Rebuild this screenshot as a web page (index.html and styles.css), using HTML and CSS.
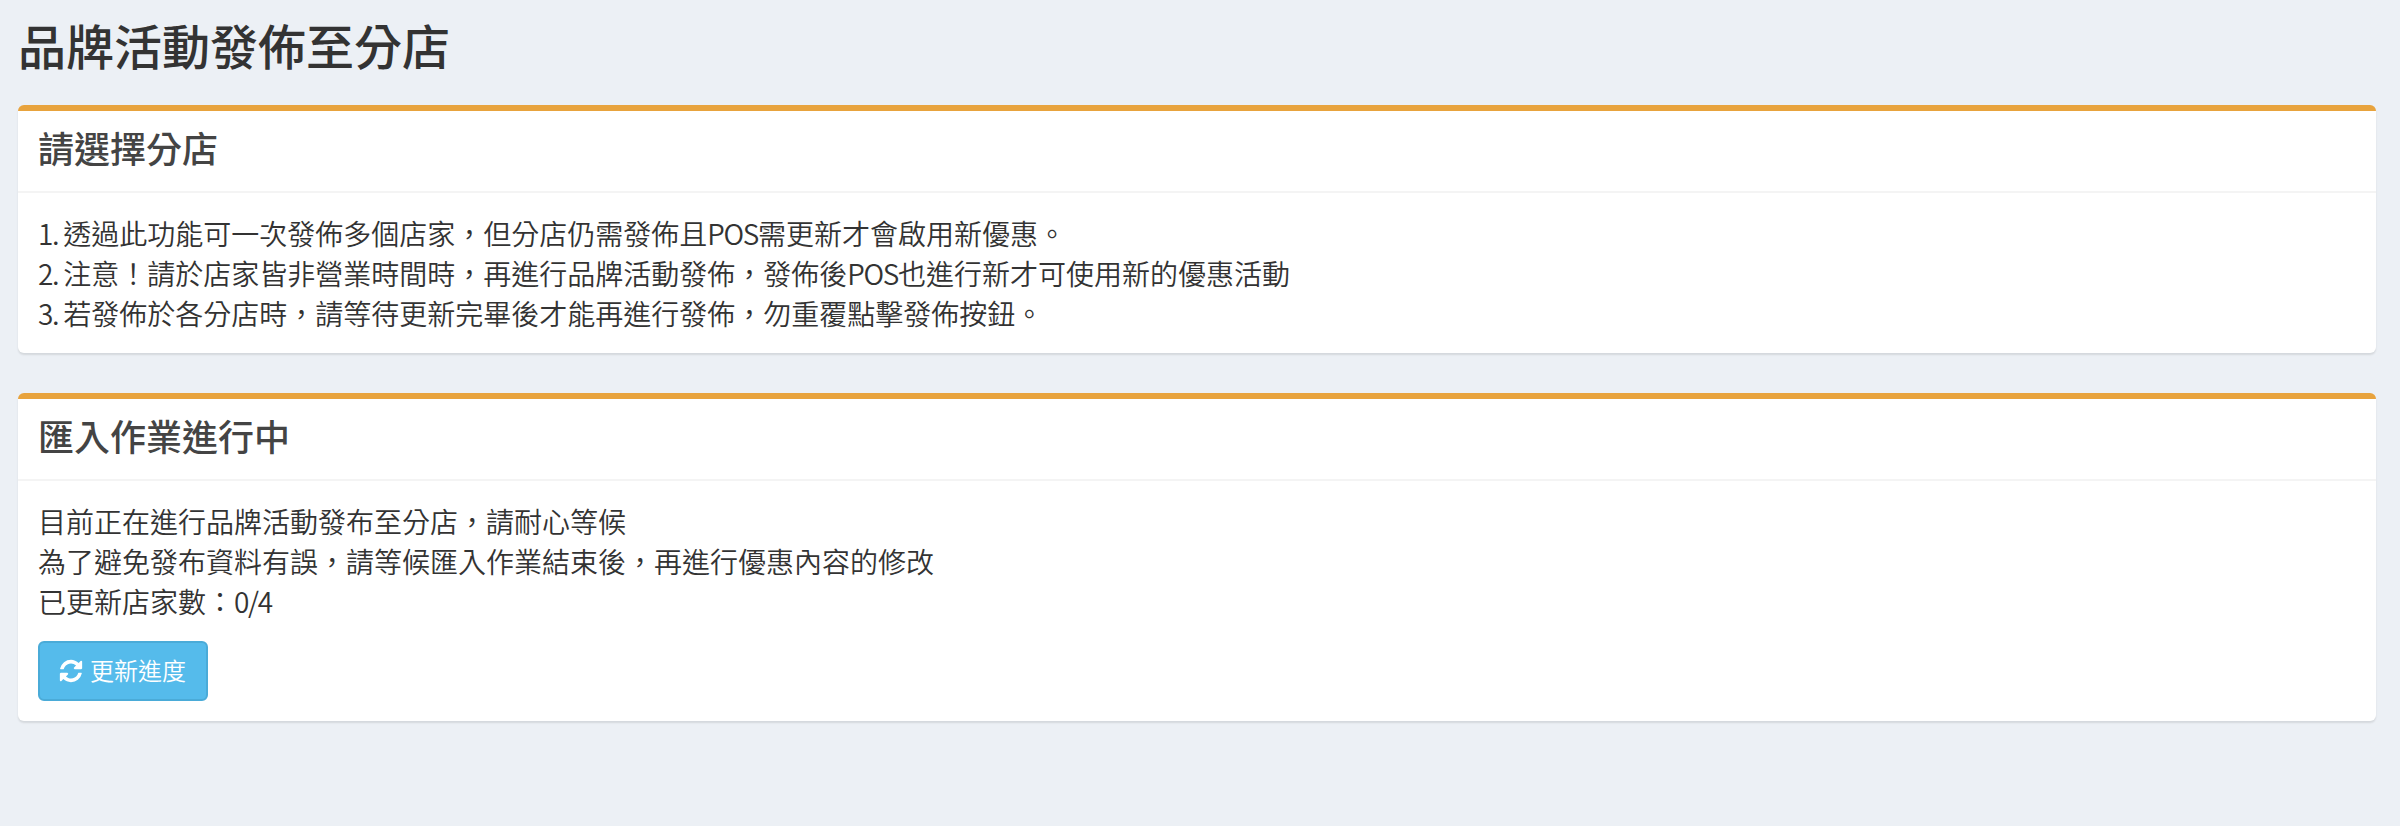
FILE: index.html
```html
<!DOCTYPE html>
<html lang="zh-Hant">
<head>
    <meta charset="UTF-8">
    <title>品牌活動發佈至分店</title>
    <link rel="stylesheet" href="styles.css">
</head>
<body>
    <h1 class="page-title">品牌活動發佈至分店</h1>

    <div class="box">
        <div class="box-header">
            <h3>請選擇分店</h3>
        </div>
        <div class="box-body">
            <span class="latin">1. </span>透過此功能可一次發佈多個店家，但分店仍需發佈且<span class="latin">POS</span>需更新才會啟用新優惠。<br>
            <span class="latin">2. </span>注意！請於店家皆非營業時間時，再進行品牌活動發佈，發佈後<span class="latin">POS</span>也進行新才可使用新的優惠活動<br>
            <span class="latin">3. </span>若發佈於各分店時，請等待更新完畢後才能再進行發佈，勿重覆點擊發佈按鈕。
        </div>
    </div>

    <div class="box">
        <div class="box-header">
            <h3>匯入作業進行中</h3>
        </div>
        <div class="box-body">
            目前正在進行品牌活動發布至分店，請耐心等候<br>
            為了避免發布資料有誤，請等候匯入作業結束後，再進行優惠內容的修改<br>
            已更新店家數：<span class="latin">0/4</span>
            <div class="actions">
                <button class="btn-info" type="button">
                    <svg class="icon" viewBox="0 0 1792 1792" aria-hidden="true"><path fill="currentColor" d="M1639 1056q0 5-1 7-64 268-268 434.5t-478 166.5q-146 0-282.5-55t-243.5-157l-129 129q-19 19-45 19t-45-19-19-45v-448q0-26 19-45t45-19h448q26 0 45 19t19 45-19 45l-137 137q71 66 161 102t187 36q134 0 250-65t186-179q11-17 53-117 8-23 30-23h192q13 0 22.5 9.5t9.5 22.5zm25-800v448q0 26-19 45t-45 19h-448q-26 0-45-19t-19-45 19-45l138-138q-148-137-349-137-134 0-250 65t-186 179q-11 17-53 117-8 23-30 23h-199q-13 0-22.5-9.5t-9.5-22.5v-7q65-268 270-434.5t480-166.5q146 0 284 55.5t245 156.5l130-129q19-19 45-19t45 19 19 45z"/></svg>
                    更新進度
                </button>
            </div>
        </div>
    </div>
</body>
</html>
```

FILE: styles.css
```css
body {
    font-family: "Noto Sans CJK TC", sans-serif;
    font-size: 28px;
    font-weight: 350;
    line-height: 40px;
    color: #333;
    background-color: #ecf0f5;
    margin: 0;
    padding: 16px 24px 0 18px;
}
.page-title {
    font-size: 48px;
    font-weight: 500;
    line-height: 56px;
    margin: 0 0 33px;
    color: #333;
}
.latin {
    letter-spacing: -1.3px;
}
.box {
    background-color: white;
    border-top: 6px solid #e8a33d;
    border-radius: 6px;
    box-shadow: 0 2px 2px rgba(0, 0, 0, 0.1);
    margin-bottom: 40px;
}
.box-header {
    height: 72px;
    padding: 0 20px 8px;
    display: flex;
    align-items: center;
    border-bottom: 2px solid #f4f4f4;
}
.box-header h3 {
    font-size: 36px;
    font-weight: 500;
    margin: 0;
    color: #444;
}
.box-body {
    padding: 20px;
}
.actions {
    margin-top: 20px;
    display: flex;
}
.btn-info {
    display: flex;
    align-items: center;
    justify-content: center;
    gap: 6px;
    width: 170px;
    height: 60px;
    padding: 0 2px 4px 0;
    font-family: inherit;
    font-size: 24px;
    font-weight: 350;
    color: white;
    background-color: #55bbeb;
    border: 2px solid #4aabd8;
    border-radius: 6px;
    cursor: pointer;
}
.icon {
    width: 26px;
    height: 26px;
    margin-top: 4px;
}
```
